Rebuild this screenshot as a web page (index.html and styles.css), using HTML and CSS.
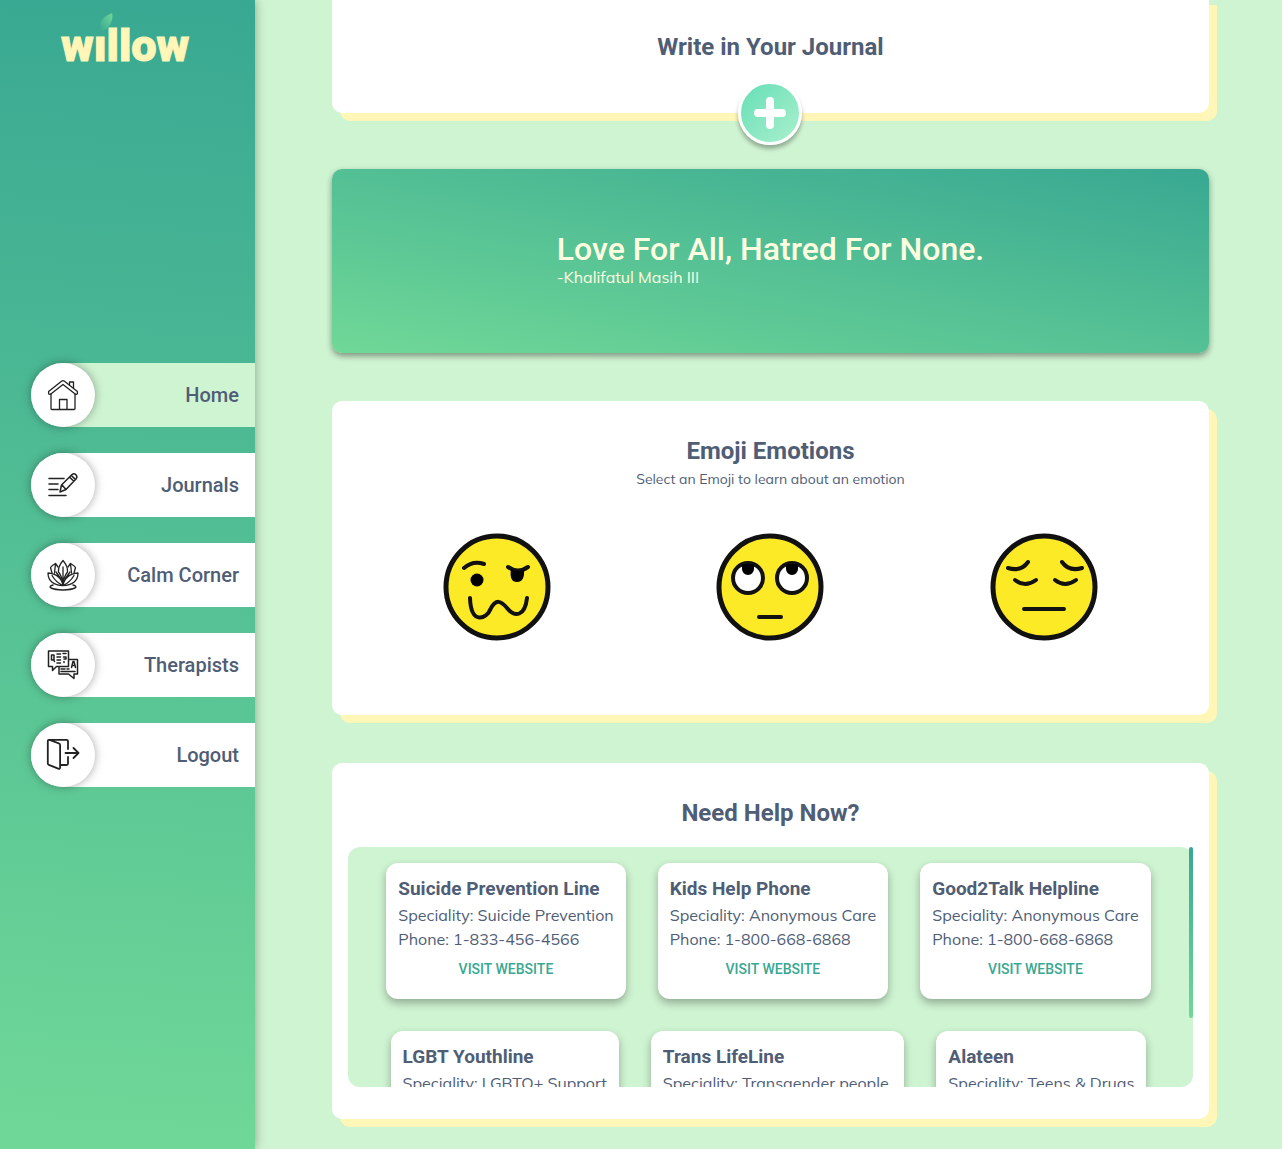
FILE: index.html
```
<!DOCTYPE html>
<html lang="en">
<head>
<meta charset="utf-8">
<meta name="viewport" content="width=device-width, initial-scale=1">
<title>Willow</title>
<link rel="stylesheet" href="styles.css">
</head>
<body>
<div class="app">
  <aside class="sidebar">
    <a class="logo" href="#" aria-label="willow">wıllow
      <svg class="logo-leaf" viewBox="0 0 14 18" aria-hidden="true">
        <defs><linearGradient id="leaf" x1="1" y1="0" x2="0" y2="1"><stop offset="0" stop-color="#6fd896"/><stop offset="1" stop-color="#3aa893"/></linearGradient></defs>
        <path d="M13 0C6 3 1 7 1 13c0 2 1 4 2 5 6-2 12-9 10-18z" fill="url(#leaf)"/>
      </svg>
    </a>
    <nav class="nav">
      <a class="nav-item nav-item-active" href="#">
        <span class="nav-icon"><svg viewBox="0 0 32 32" aria-hidden="true">
          <path d="M1.600 12.600 14.500 2.200a2.400 2.400 0 0 1 3 0L30.400 12.600v1.600a1.200 1.200 0 0 1-1.900 1L16 5.500 3.500 15.200a1.200 1.200 0 0 1-1.900-1z"/>
          <path d="M4 15v14.500a1 1 0 0 0 1 1h22a1 1 0 0 0 1-1V15M12.500 30V20.500h7.500V30M22.500 6V3h4v6"/>
        </svg></span>
        <span>Home</span>
      </a>
      <a class="nav-item" href="#">
        <span class="nav-icon"><svg viewBox="0 0 32 32" aria-hidden="true">
          <path stroke-width="1.600" d="M2 9.500h15M2 15h9M2 20.500h9M2 26.500h17"/>
          <path stroke-width="1.500" d="M13 23l1.500-7L25 5.500a3 3 0 0 1 4.200 4.200L19 20.500zM15 16l4 4.500M22.500 8l4.300 4.300M24.200 6.300l4.300 4.300"/>
        </svg></span>
        <span>Journals</span>
      </a>
      <a class="nav-item" href="#">
        <span class="nav-icon"><svg viewBox="0 0 32 32" aria-hidden="true">
          <path d="M16 1.500c-3 3.500-5 7-4.500 11.500C14 16 15.500 20 16 26c.5-6 2-10 4.500-13C21 8.500 19 5 16 1.500zM16 8v18"/>
          <path d="M11 8 8.500 4.500C7 5.500 5 6 3.500 8.500L5 14M21 8l2.500-3.500C25 5.500 27 6 28.500 8.500L27 14M8.500 4.500 7.500 14M23.500 4.500l1 9.500"/>
          <path d="M1 14c0 8 6 12.500 15 12.500C15 19 9 14.500 1 14zM31 14c0 8-6 12.500-15 12.500C17 19 23 14.500 31 14zM5 16.500c3 5 6 8 11 10M27 16.500c-3 5-6 8-11 10M9 13l5 7M23 13l-5 7"/>
          <path stroke-width="1.500" d="M6 26c-3 .5-3.500 2-2 3 5 2.500 19 2.500 24 0 1.500-1 1-2.500-2-3"/>
        </svg></span>
        <span>Calm Corner</span>
      </a>
      <a class="nav-item" href="#">
        <span class="nav-icon"><svg viewBox="0 0 32 32" aria-hidden="true">
          <path stroke-width="1.500" d="M1.500 2h20V17.500H9.500l-4 4v-4h-4zM21.500 10.500h9V25h-3.500v4.500L21.500 25h-9.500v-7.500"/>
          <path stroke-width="1.500" d="M4.500 6h2.500v5H4.500zM6.500 10.500l1 2M10 5h3.500M10 8h3.500M10 11h3.500M10 14h3.500M16 4.500h3M16.500 8h2.500v2h-2M17 12.500v1M24.500 18.500l1.500-6h1l1.500 6M25 16.500h3M14 20h4M20 20h2M14 22.500h14"/>
        </svg></span>
        <span>Therapists</span>
      </a>
      <a class="nav-item" href="#">
        <span class="nav-icon"><svg viewBox="0 0 32 32" aria-hidden="true">
          <path stroke-width="1.800" d="M2.500.8h17a1.500 1.500 0 0 1 1.500 1.500V10M21 18v6.500a1.500 1.500 0 0 1-1.500 1.500H14M.8 2v22.500q0 1 1 1.300l9.500 3.800q1.800.6 1.800-1V6q0-1.200-1.200-1.600L2.600 1Q.8.600.8 2zM18.500 14H31M26.500 9l5 5-5 5"/>
        </svg></span>
        <span>Logout</span>
      </a>
    </nav>
  </aside>

  <main class="main">
    <section class="card journal">
      <h2 class="card-title">Write in Your Journal</h2>
      <button class="add-button" type="button" aria-label="Add journal entry">
        <svg viewBox="0 0 32 32" aria-hidden="true"><path d="M16 4v24M4 16h24"/></svg>
      </button>
    </section>

    <section class="quote">
      <blockquote class="quote-body">
        <p class="quote-text">Love For All, Hatred For None.</p>
        <footer class="quote-author">-Khalifatul Masih III</footer>
      </blockquote>
    </section>

    <section class="card emotions">
      <h2 class="card-title">Emoji Emotions</h2>
      <p class="card-subtitle">Select an Emoji to learn about an emotion</p>
      <div class="emoji-row">
        <button class="emoji" type="button" aria-label="Woozy">
          <svg viewBox="0 0 132 132" aria-hidden="true">
            <circle class="face" cx="66" cy="66" r="51"/>
            <path class="line" d="M33 47q9-8 20-4M77 46q10 7 20 0M39 77c1 28 17 20 20 12 6-12 11-9 17-2 8 10 18 8 20-10"/>
            <circle cx="46" cy="59" r="6.500"/><path d="M80 48q7 4 13 0 1 13-7 13t-6-13z"/>
          </svg>
        </button>
        <button class="emoji" type="button" aria-label="Rolling eyes">
          <svg viewBox="0 0 132 132" aria-hidden="true">
            <circle class="face" cx="66" cy="66" r="51"/>
            <circle class="eye" cx="44" cy="57" r="15"/><circle class="eye" cx="88" cy="57" r="15"/>
            <path d="M38 43h12v5a6 6 0 0 1-12 0zM82 43h12v5a6 6 0 0 1-12 0z"/>
            <path class="line" d="M55 96h22"/>
          </svg>
        </button>
        <button class="emoji" type="button" aria-label="Pensive">
          <svg viewBox="0 0 132 132" aria-hidden="true">
            <circle class="face" cx="66" cy="66" r="51"/>
            <path class="line" d="M30 47q13 4 20-6M84 41q7 10 20 6M37 59q10 8 21 0M77 59q10 8 21 0M46 88h40"/>
          </svg>
        </button>
      </div>
    </section>

    <section class="card help">
      <h2 class="card-title">Need Help Now?</h2>
      <div class="resources-frame">
        <div class="resources">
          <article class="resource">
            <h3 class="resource-name">Suicide Prevention Line</h3>
            <p>Speciality: Suicide Prevention</p>
            <p>Phone: 1-833-456-4566</p>
            <a class="resource-link" href="#">VISIT WEBSITE</a>
          </article>
          <article class="resource">
            <h3 class="resource-name">Kids Help Phone</h3>
            <p>Speciality: Anonymous Care</p>
            <p>Phone: 1-800-668-6868</p>
            <a class="resource-link" href="#">VISIT WEBSITE</a>
          </article>
          <article class="resource">
            <h3 class="resource-name">Good2Talk Helpline</h3>
            <p>Speciality: Anonymous Care</p>
            <p>Phone: 1-800-668-6868</p>
            <a class="resource-link" href="#">VISIT WEBSITE</a>
          </article>
          <article class="resource">
            <h3 class="resource-name">LGBT Youthline</h3>
            <p>Speciality: LGBTQ+ Support</p>
            <p>Phone: 1-800-268-9688</p>
            <a class="resource-link" href="#">VISIT WEBSITE</a>
          </article>
          <article class="resource">
            <h3 class="resource-name">Trans LifeLine</h3>
            <p>Speciality: Transgender people</p>
            <p>Phone: 1-877-330-6366 (CAN)</p>
            <a class="resource-link" href="#">VISIT WEBSITE</a>
          </article>
          <article class="resource">
            <h3 class="resource-name">Alateen</h3>
            <p>Speciality: Teens &amp; Drugs</p>
            <p>Phone: 1-888-425-2666</p>
            <a class="resource-link" href="#">VISIT WEBSITE</a>
          </article>
        </div>
        <span class="scroll-thumb" aria-hidden="true"></span>
      </div>
    </section>
  </main>
</div>
</body>
</html>
```
FILE: styles.css
```
:root {
  --teal: #38a892;
  --green: #70d897;
  --mint: #cff4d2;
  --cream: #fff6b8;
  --ink: #4f5d75;
}

* {
  box-sizing: border-box;
}

body,
h2,
h3,
p,
blockquote {
  margin: 0;
}

body {
  background: var(--mint);
  color: var(--ink);
  font: 16px/24px Mulish, Nunito, sans-serif;
}

a {
  color: inherit;
  text-decoration: none;
}

.app {
  display: flex;
  min-height: 100vh;
}

/* Sidebar */
.sidebar {
  position: relative;
  display: flex;
  flex: 0 0 255px;
  flex-direction: column;
  justify-content: center;
  background: linear-gradient(4deg, var(--green), var(--teal));
  box-shadow: 0 0 10px rgba(0, 0, 0, 0.35);
}

.logo {
  position: absolute;
  top: 19px;
  left: 61px;
  color: var(--cream);
  font: 900 45px/54px Roboto, sans-serif;
  -webkit-text-stroke: 1px var(--cream);
}

.logo-leaf {
  position: absolute;
  top: -6px;
  left: 38px;
  width: 14px;
  height: 18px;
}

.nav {
  display: flex;
  flex-direction: column;
  gap: 26px;
  padding-left: 31px;
}

.nav-item {
  display: flex;
  align-items: center;
  justify-content: space-between;
  height: 64px;
  padding-right: 16px;
  border-radius: 32px 0 0 32px;
  background: #fff;
  font: 500 20px/24px Roboto, sans-serif;
}

.nav-item-active {
  background: var(--mint);
}

.nav-icon {
  display: flex;
  align-items: center;
  justify-content: center;
  width: 64px;
  height: 64px;
  border-radius: 50%;
  background: #fff;
  box-shadow: 0 0 10px rgba(0, 0, 0, 0.35);
}

.nav-icon svg {
  width: 32px;
  height: 32px;
  overflow: visible;
  fill: none;
  stroke: #222;
  stroke-width: 1.3;
  stroke-linecap: round;
  stroke-linejoin: round;
}

/* Main column */
.main {
  display: flex;
  flex: 1;
  flex-direction: column;
  gap: 48px;
  min-width: 0;
  padding: 0 73px 30px 77px;
}

.card {
  padding: 32px 16px;
  border-radius: 10px;
  background: #fff;
  box-shadow: 8px 8px 0 var(--cream);
  text-align: center;
}

.card-title {
  font: 700 24px/36px Roboto, sans-serif;
}

.card-subtitle {
  font-size: 14px;
  line-height: 20px;
}

.journal {
  position: relative;
  margin: -3px 0 8px;
  padding-bottom: 48px;
  border-radius: 0 0 10px 10px;
}

.add-button {
  position: absolute;
  bottom: -32px;
  left: calc(50% - 33px);
  display: grid;
  place-items: center;
  width: 64px;
  height: 64px;
  padding: 0;
  border: 3px solid #fff;
  border-radius: 50%;
  background: linear-gradient(135deg, #66dfb8, #aaf0cc);
  box-shadow: 0 4px 4px rgba(0, 0, 0, 0.3);
}

.add-button svg {
  width: 32px;
  height: 32px;
  fill: none;
  stroke: #fff;
  stroke-width: 8;
  stroke-linecap: round;
}

/* Quote */
.quote {
  display: flex;
  justify-content: center;
  padding: 62px 16px 66px;
  border-radius: 10px;
  background: linear-gradient(11deg, var(--green), var(--teal));
  box-shadow: 0 3px 6px rgba(0, 0, 0, 0.4);
  color: #fffde0;
}

.quote-text {
  font: 500 32px/36px Roboto, sans-serif;
}

.quote-author {
  line-height: 20px;
}

/* Emotions */
.emotions {
  padding-bottom: 62px;
}

.emoji-row {
  display: grid;
  grid-template-columns: repeat(3, 1fr);
  justify-items: center;
  padding: 32px 12px 0;
}

.emoji {
  padding: 0;
  border: 0;
  background: none;
}

.emoji svg {
  display: block;
  width: 132px;
  height: 132px;
}

.face {
  fill: #fcea27;
  stroke: #111;
  stroke-width: 5;
}

.eye {
  fill: #fff;
  stroke: #111;
  stroke-width: 4;
}

.line {
  fill: none;
  stroke: #111;
  stroke-width: 4;
  stroke-linecap: round;
}

/* Help resources */
.resources-frame {
  position: relative;
  margin-top: 16px;
}

.resources {
  display: flex;
  flex-wrap: wrap;
  justify-content: center;
  height: 240px;
  padding-right: 4px;
  overflow-y: auto;
  border-radius: 12px;
  background: var(--mint);
  text-align: left;
  scrollbar-width: none;
}

.scroll-thumb {
  position: absolute;
  top: 0;
  right: 0;
  width: 4px;
  height: 171px;
  border-radius: 4px;
  background: linear-gradient(var(--teal), var(--green));
}

.resource {
  display: flex;
  flex-direction: column;
  margin: 16px;
  padding: 12px;
  border-radius: 12px;
  background: #fff;
  box-shadow: 0 4px 8px rgba(0, 0, 0, 0.3);
}

.resource-name {
  font: 700 19px/28px Roboto, sans-serif;
}

.resource-link {
  align-self: center;
  color: var(--teal);
  font: 500 14px/36px Roboto, sans-serif;
}
```
